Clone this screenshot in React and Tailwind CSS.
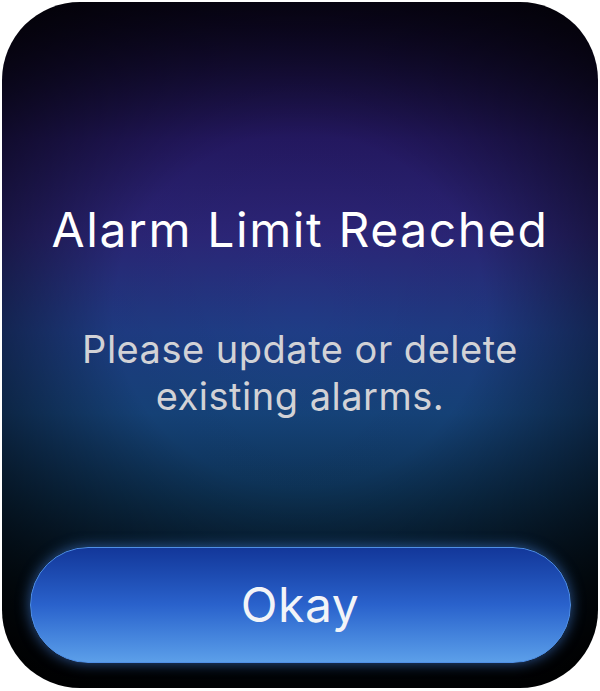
export default function App() {
  return (
    <div className="w-[600px] h-[691px] bg-white pt-[2px] px-[2px] pb-[3px] font-['Inter','Lato',sans-serif]">
      {/* Watch screen */}
      <div
        className="
          h-full rounded-[78px] overflow-hidden
          flex flex-col items-center
          bg-[radial-gradient(ellipse_78%_64%_at_50%_45%,rgba(0,0,0,0)_0%,rgba(0,0,0,0.05)_40%,rgba(0,0,0,0.9)_100%),linear-gradient(to_bottom,#0c0620_0%,#251964_20%,#2c2679_34%,#1f3d86_48%,#16447c_60%,#0d3356_72%,#061a2a_85%,#02070d_100%)]
        "
      >
        {/* Title */}
        <h1 className="mt-[200px] text-[48px] leading-[56px] font-normal text-white tracking-[1.6px] whitespace-nowrap">
          Alarm Limit Reached
        </h1>

        {/* Message */}
        <p className="mt-[68px] text-[38px] leading-[47px] text-[#d2d2d6] text-center tracking-[0.5px] whitespace-nowrap">
          Please update or delete
          <br />
          existing alarms.
        </p>

        {/* Okay button */}
        <button
          className="
            mt-auto mb-[25px] w-[541px] h-[116px]
            rounded-full border-[1.5px] border-[#4f8fe6]
            bg-gradient-to-b from-[#13379a] via-[#2a62cc] to-[#5c9fe9]
            shadow-[0_0_14px_rgba(80,150,255,0.55)]
            flex items-center justify-center
            text-[48px] text-[#f2f4f8] tracking-[0.5px]
          "
        >
          Okay
        </button>
      </div>
    </div>
  );
}
